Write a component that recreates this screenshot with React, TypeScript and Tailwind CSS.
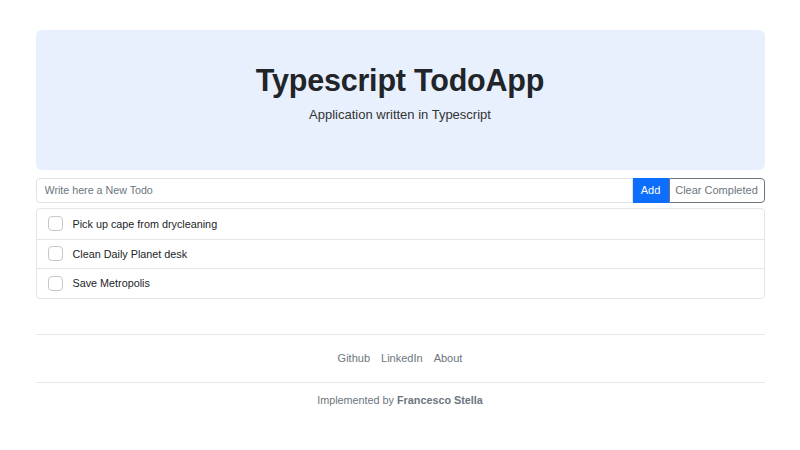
import { useState } from 'react';

interface Todo {
  id: number;
  text: string;
  done: boolean;
}

const INITIAL: Todo[] = [
  { id: 1, text: 'Pick up cape from drycleaning', done: false },
  { id: 2, text: 'Clean Daily Planet desk', done: false },
  { id: 3, text: 'Save Metropolis', done: false },
];

export default function App() {
  const [todos, setTodos] = useState<Todo[]>(INITIAL);
  const [input, setInput] = useState('');

  function add() {
    const t = input.trim();
    if (!t) return;
    setTodos((prev) => [...prev, { id: Date.now(), text: t, done: false }]);
    setInput('');
  }

  return (
    <div className="min-h-screen bg-white font-['Liberation_Sans',Arial,sans-serif] text-[#212529]">
      <div className="mx-auto w-[729px] pt-[30px]">
        {/* Header */}
        <div className="flex h-[140px] flex-col items-center rounded-md bg-[#e8f0fe] pt-[34px]">
          <h1 className="text-[30.5px] font-bold leading-[32px] tracking-[-0.2px]">Typescript TodoApp</h1>
          <p className="mt-[11px] text-[13px] font-light leading-[16px] text-[#333]">Application written in Typescript</p>
        </div>

        {/* Input */}
        <div className="mt-2 flex h-[25px] text-[10.7px]">
          <input
            value={input}
            onChange={(e) => setInput(e.target.value)}
            placeholder="Write here a New Todo"
            className="min-w-0 flex-1 rounded-l-[4px] border border-[#dee2e6] px-2 text-[#212529] outline-none placeholder:text-[#6c757d]"
          />
          <button type="button" onClick={add} className="w-[36px] bg-[#0d6efd] text-[11px] text-white">
            Add
          </button>
          <button
            type="button"
            onClick={() => setTodos((prev) => prev.filter((t) => !t.done))}
            className="w-[96px] rounded-r-[4px] border border-[#6c757d] text-[11px] text-[#6c757d]"
          >
            Clear Completed
          </button>
        </div>

        {/* List */}
        <ul className="mt-[5px] rounded-[4px] border border-[#e3e6e9]">
          {todos.map((t, i) => (
            <li
              key={t.id}
              className={`flex h-[29.5px] items-center gap-[10px] pl-[11px] text-[10.8px] ${
                i > 0 ? 'border-t border-[#e3e6e9]' : ''
              }`}
            >
              <input
                type="checkbox"
                checked={t.done}
                onChange={() =>
                  setTodos((prev) => prev.map((x) => (x.id === t.id ? { ...x, done: !x.done } : x)))
                }
                className="h-[15px] w-[15px] appearance-none rounded-[4px] border border-[#c4c8cc] bg-white checked:bg-[#0d6efd]"
              />
              <span className={t.done ? 'line-through text-[#6c757d]' : ''}>{t.text}</span>
            </li>
          ))}
        </ul>

        {/* Footer */}
        <footer className="mt-[35px]">
          <div className="border-t border-[#e6e8ea]" />
          <nav className="flex h-[47px] items-center justify-center gap-[11px] text-[11px] text-[#6c757d]">
            <a href="#">Github</a>
            <a href="#">LinkedIn</a>
            <a href="#">About</a>
          </nav>
          <div className="border-t border-[#e6e8ea]" />
          <p className="mt-[9px] text-center text-[10.8px] text-[#6c757d]">
            Implemented by <span className="font-bold">Francesco Stella</span>
          </p>
        </footer>
      </div>
    </div>
  );
}
